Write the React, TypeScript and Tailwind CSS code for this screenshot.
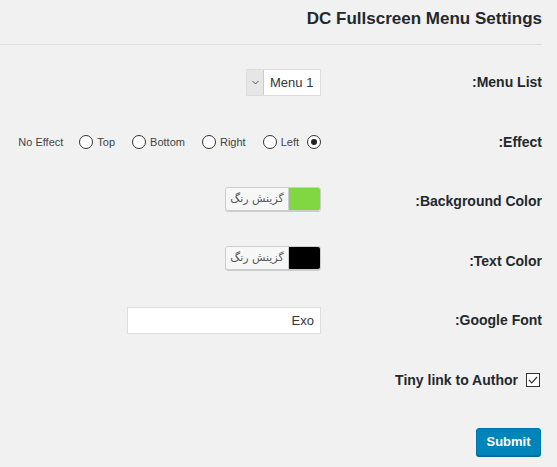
const LABEL = 'w-[221px] shrink-0 text-right text-[14px] font-bold text-[#23282d]';

function Radio({ checked = false }: { checked?: boolean }) {
  return (
    <span className="w-[14px] h-[14px] rounded-full border border-[#333] bg-white flex items-center justify-center shrink-0">
      {checked && <span className="w-[6px] h-[6px] rounded-full bg-[#222]" />}
    </span>
  );
}

function ColorPicker({ color }: { color: string }) {
  return (
    <div className="flex h-[24px] w-[96px] -mt-[6px] rounded-[3px] border border-[#ccc] overflow-hidden shadow-[0_1px_0_#ccc]">
      <span
        className="flex-1 bg-[#f7f7f7] flex items-center justify-center text-[11px] text-[#555] border-r border-[#ccc]"
        style={{ fontFamily: '"DejaVu Sans", sans-serif' }}
        dir="rtl"
      >
        گزینش رنگ
      </span>
      <span className="w-[31px]" style={{ backgroundColor: color }} />
    </div>
  );
}

function Row({ label, children }: { label: string; children?: React.ReactNode }) {
  return (
    <div className="flex items-center h-[59.5px]">
      <div className="flex-1 flex justify-end items-center">{children}</div>
      <div className={LABEL}>{label}</div>
    </div>
  );
}

export default function App() {
  const effects = ['Top', 'Bottom', 'Right', 'Left'];

  return (
    <div className="w-[557px] h-[467px] bg-[#f1f1f1] pr-[15px] font-['Liberation_Sans',Arial,sans-serif] overflow-hidden">
      {/* Header */}
      <div className="h-[45px] border-b border-[#dcdcdc] flex items-center justify-end">
        <h2 className="text-[17px] font-bold text-[#23282d] -mt-[7px]">DC Fullscreen Menu Settings</h2>
      </div>

      <div className="pt-[8px]">
        <Row label=":Menu List">
          <div className="flex h-[27px] w-[75px] border border-[#ddd] bg-white">
            <span className="w-[17px] bg-[#e6e6e6] border-r border-[#ccc] flex items-center justify-center">
              <svg width="7" height="5" viewBox="0 0 7 5">
                <path d="M0.5 1 L3.5 4 L6.5 1" fill="none" stroke="#555" strokeWidth="1" />
              </svg>
            </span>
            <span className="flex-1 flex items-center pl-[6px] text-[13px] text-[#32373c]">Menu 1</span>
          </div>
        </Row>

        <Row label=":Effect">
          <div className="flex items-center text-[11px] text-[#444]">
            <span className="mr-[16px]">No Effect</span>
            {effects.map((e, i) => (
              <span key={e} className="flex items-center">
                <Radio />
                <span className={i === effects.length - 1 ? 'ml-[4px] mr-[8px]' : 'ml-[4px] mr-[17px]'}>{e}</span>
              </span>
            ))}
            <Radio checked />
          </div>
        </Row>

        <Row label=":Background Color">
          <ColorPicker color="#81d742" />
        </Row>

        <Row label=":Text Color">
          <ColorPicker color="#000000" />
        </Row>

        <Row label=":Google Font">
          <input
            readOnly
            value="Exo"
            className="w-[194px] h-[27px] border border-[#ddd] bg-white text-right pr-[6px] text-[13px] text-[#32373c] outline-none"
          />
        </Row>

        <div className="flex items-center justify-end h-[59.5px]">
          <span className="text-[14px] font-bold text-[#23282d] mr-[8px]">Tiny link to Author</span>
          <span className="w-[14px] h-[14px] border border-[#333] bg-white flex items-center justify-center mr-[2px]">
            <svg width="10" height="8" viewBox="0 0 10 8">
              <path d="M1 4 L3.8 6.8 L9 1" fill="none" stroke="#333" strokeWidth="1.2" />
            </svg>
          </span>
        </div>
      </div>

      <div className="flex justify-end mt-[18px] pr-[1px]">
        <button className="h-[28px] w-[65px] rounded-[3px] bg-[#0085ba] border border-[#0073aa] shadow-[0_1px_0_#006799] text-white text-[13px] font-bold">
          Submit
        </button>
      </div>
    </div>
  );
}
